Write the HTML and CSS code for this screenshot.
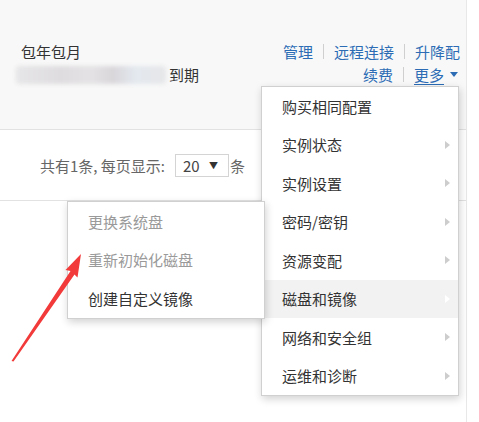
FILE: index.html
```html
<!DOCTYPE html>
<html>
<head>
    <meta charset="utf-8">
    <link rel="stylesheet" href="styles.css">
</head>
<body>
    <div class="page">
        <div class="summary">
            <div class="billing">
                <div class="line">包年包月</div>
                <div class="line"><span class="masked"></span>到期</div>
            </div>
            <div class="ops">
                <div class="line">
                    <a href="#">管理</a><span class="sep"></span>
                    <a href="#">远程连接</a><span class="sep"></span>
                    <a href="#">升降配</a>
                </div>
                <div class="line">
                    <a href="#">续费</a><span class="sep"></span>
                    <a href="#" class="more">更多</a><i class="caret"></i>
                </div>
            </div>
        </div>

        <div class="pager">
            <span>共有1条, 每页显示:</span>
            <span class="select"><span>20</span><i class="select-arrow">▼</i></span>
            <span>条</span>
        </div>

        <ul class="menu">
            <li class="menu-item">购买相同配置</li>
            <li class="menu-item has-sub">实例状态</li>
            <li class="menu-item has-sub">实例设置</li>
            <li class="menu-item has-sub">密码/密钥</li>
            <li class="menu-item has-sub">资源变配</li>
            <li class="menu-item has-sub active">磁盘和镜像</li>
            <li class="menu-item has-sub">网络和安全组</li>
            <li class="menu-item has-sub">运维和诊断</li>
        </ul>

        <ul class="menu submenu">
            <li class="menu-item disabled">更换系统盘</li>
            <li class="menu-item disabled">重新初始化磁盘</li>
            <li class="menu-item">创建自定义镜像</li>
        </ul>

        <svg class="annotation" width="479" height="422" viewBox="0 0 479 422">
            <polygon fill="#f23a3a" points="81,254 65.5,270 70.5,271 11.5,361 13.5,361.5 74.5,274.5 77.5,277.5"/>
        </svg>
    </div>
</body>
</html>
```

FILE: styles.css
```css
body {
    margin: 0;
    background-color: #fff;
    font-family: "Noto Sans CJK SC", "Liberation Sans", sans-serif;
    font-size: 15px;
    color: #333;
}

.page {
    position: relative;
    width: 466px;
    height: 422px;
    border-right: 1px solid #e8e8e8;
}

.summary {
    display: flex;
    justify-content: space-between;
    height: 130px;
    padding: 40px 6px 0 21px;
    box-sizing: border-box;
    background-color: #f8f8f8;
    border-bottom: 1px solid #e2e2e2;
}

.line {
    display: flex;
    align-items: center;
    height: 23px;
}

.masked {
    display: inline-block;
    width: 150px;
    height: 18px;
    margin-left: -5px;
    margin-right: 3px;
    border-radius: 4px;
    background: linear-gradient(90deg, #e6e5e7 0%, #dedcde 30%, #e4e2e4 50%, #d9d6da 65%, #e3e9ef 80%, #e6e6e8 100%);
    filter: blur(2px);
}

.ops .line {
    justify-content: flex-end;
}

.ops a {
    color: #2c6cb5;
    text-decoration: none;
}

.ops a.more {
    text-decoration: underline;
    text-underline-offset: 3px;
}

.sep {
    display: inline-block;
    width: 1px;
    height: 15px;
    margin: 0 10px;
    background-color: #cfcfcf;
}

.caret {
    display: inline-block;
    margin-left: 6px;
    margin-right: 2px;
    border-left: 4px solid transparent;
    border-right: 4px solid transparent;
    border-top: 5px solid #2c6cb5;
}

.pager {
    display: flex;
    align-items: center;
    height: 70px;
    padding-left: 40px;
    border-bottom: 1px solid #e2e2e2;
    color: #666;
}

.select {
    display: flex;
    align-items: center;
    justify-content: space-between;
    width: 54px;
    height: 23px;
    margin-left: 10px;
    margin-right: 1px;
    padding: 0 10px 0 7px;
    box-sizing: border-box;
    border: 1px solid #d4d4d4;
    color: #444;
}

.select-arrow {
    font-style: normal;
    font-size: 9px;
    color: #333;
}

.menu {
    position: absolute;
    left: 261px;
    top: 86px;
    width: 198px;
    margin: 0;
    padding: 0;
    list-style: none;
    background-color: #fff;
    border: 1px solid #d0d0d0;
    box-sizing: border-box;
    box-shadow: 1px 3px 8px rgba(0, 0, 0, 0.18);
}

.submenu {
    left: 67px;
    top: 201px;
}

.menu-item {
    position: relative;
    display: flex;
    align-items: center;
    height: 38.5px;
    padding-left: 20px;
}

.menu-item.has-sub::after {
    content: "";
    position: absolute;
    right: 8px;
    top: 15px;
    border-top: 4.5px solid transparent;
    border-bottom: 4.5px solid transparent;
    border-left: 5px solid #cdcdcd;
}

.menu-item.active {
    background-color: #f2f2f2;
}

.menu-item.active::after {
    border-left-color: #fff;
}

.menu-item.disabled {
    color: #9a9a9a;
}

.annotation {
    position: absolute;
    left: 0;
    top: 0;
    pointer-events: none;
}
```
